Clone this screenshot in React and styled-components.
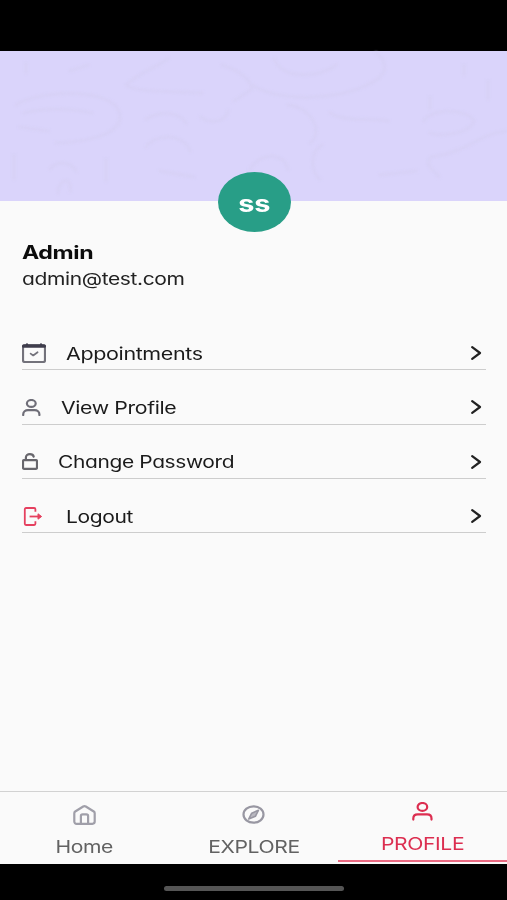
import React from 'react';
import styled, { createGlobalStyle } from 'styled-components';


const menu = [
    { id: 'appointments', label: 'Appointments', icon: CalendarIcon, gap: 20, stretch: 1.265 },
    { id: 'view', label: 'View Profile', icon: UserIcon, gap: 20, stretch: 1.25 },
    { id: 'password', label: 'Change Password', icon: LockIcon, gap: 20.5, stretch: 1.232 },
    { id: 'logout', label: 'Logout', icon: LogoutIcon, gap: 23, stretch: 1.235 },
];

export default function App(){
    return(
        <Screen>
            <GlobalStyle/>
            <StatusBar/>
            <Banner>
                <BannerPattern/>
                <Avatar><Text $stretch={1.2}>ss</Text></Avatar>
            </Banner>

            <Content>
                <Name><Text $stretch={1.25}>Admin</Text></Name>
                <Email><Text $stretch={1.235}>admin@test.com</Text></Email>

                <Menu>
                    {menu.map(({ id, label, icon: Icon, gap, stretch }) => (
                        <MenuItem key={id}>
                            <Icon/>
                            <MenuLabel $gap={gap}><Text $stretch={stretch}>{label}</Text></MenuLabel>
                            <ChevronIcon/>
                        </MenuItem>
                    ))}
                </Menu>
            </Content>

            <TabBar>
                <Tab>
                    <HomeIcon/>
                    <TabLabel><Text $center $stretch={1.24}>Home</Text></TabLabel>
                </Tab>
                <Tab>
                    <CompassIcon/>
                    <TabLabel><Text $center $stretch={1.24}>EXPLORE</Text></TabLabel>
                </Tab>
                <Tab $active>
                    <ProfileIcon/>
                    <TabLabel><Text $center $stretch={1.24}>PROFILE</Text></TabLabel>
                </Tab>
            </TabBar>
            <BottomBar>
                <HomeIndicator/>
            </BottomBar>
        </Screen>
    )
}

// icons
function CalendarIcon(){
    return(
        <Icon width='24' height='20' viewBox='0 0 24 20' $color='#73727b'>
            <rect x='1' y='2' width='22' height='17' rx='1.8'/>
            <path d='M1.6 3.2h20.8' stroke='#3f3d4c' strokeWidth='3.2'/>
            <path d='M5 1.4v1M19 1.4v1' stroke='#3f3d4c'/>
            <path d='M8.6 10.6l2.6 1.9 4.4-3.3' strokeWidth='1.7'/>
        </Icon>
    )
}

function UserIcon(){
    return(
        <Icon width='19' height='17' viewBox='0 0 19 17' $color='#6f6e78'>
            <ellipse cx='9.3' cy='4.4' rx='4.4' ry='3.4'/>
            <path d='M1.2 16v-.6c0-2.6 2.2-4.3 4.8-4.3h6.6c2.6 0 4.8 1.7 4.8 4.3v.6'/>
        </Icon>
    )
}

function LockIcon(){
    return(
        <Icon width='16' height='17' viewBox='0 0 16 17' $color='#67666c'>
            <rect x='1' y='7.2' width='14' height='8.6' rx='1'/>
            <path d='M3.9 7V4.6c0-2 1.7-3.5 4-3.5 2 0 3.4 1 3.8 2.5'/>
        </Icon>
    )
}

function LogoutIcon(){
    return(
        <LogoutSvg width='21' height='19' viewBox='0 0 21 19' $color='#e5405f'>
            <path d='M13.4 4.8V2.2c0-.7-.5-1.2-1.2-1.2H4c-.7 0-1.2.5-1.2 1.2v14.6c0 .7.5 1.2 1.2 1.2h8.2c.7 0 1.2-.5 1.2-1.2v-2.6'/>
            <path d='M7.6 9.5H17'/>
            <path d='M16 6.8l3.6 2.7-3.6 2.7z' fill='#e5405f' strokeWidth='1'/>
        </LogoutSvg>
    )
}

function ChevronIcon(){
    return(
        <Icon width='15' height='14' viewBox='0 0 15 14' $color='#222'>
            <path d='M1.2 1.2l7.8 5.8-7.8 5.8'/>
        </Icon>
    )
}

function HomeIcon(){
    return(
        <Icon width='23' height='20' viewBox='0 0 23 20' $color='#a09fa9'>
            <path d='M1.3 8.2c0-.7.3-1.3.9-1.7l8-5c.9-.5 1.7-.5 2.6 0l8 5c.6.4.9 1 .9 1.7v8.4c0 1.3-1 2.2-2.3 2.2H3.6c-1.3 0-2.3-.9-2.3-2.2z'/>
            <path d='M7.9 18.6v-7.6c0-1 .7-1.6 1.7-1.6h3.8c1 0 1.7.6 1.7 1.6v7.6'/>
        </Icon>
    )
}

function CompassIcon(){
    return(
        <Icon width='23' height='19' viewBox='0 0 23 19' $color='#9897a2'>
            <ellipse cx='11.5' cy='9.5' rx='10' ry='8.2'/>
            <path d='M16.4 5.3l-3 6-6.7 2.7 3-5.8z' fill='#b9b8c0' strokeWidth='1.6'/>
        </Icon>
    )
}

function ProfileIcon(){
    return(
        <Icon width='21' height='19' viewBox='0 0 21 19' $color='#dc2e50'>
            <ellipse cx='10.4' cy='4.9' rx='4.8' ry='3.9'/>
            <path d='M1.3 17.6v-1.2c0-2.4 1.8-4.1 4.4-4.1h9.4c2.6 0 4.4 1.7 4.4 4.1v1.2'/>
        </Icon>
    )
}

// faint contour lines behind the avatar
function BannerPattern(){
    return(
        <PatternSvg width='507' height='150' viewBox='0 0 507 150'>
            <path d='M16 54c20-14 88-18 102 4 10 22-20 32-62 34M24 62c22-6 50-4 68 0M20 76l28 4'/>
            <path d='M168 8c-12 8-32 16-42 26 8 8 50 6 76 8M222 14c18 6 28 14 30 24l-18 12'/>
            <path d='M252 34c30 18 92 16 126-6 10-8 8-20-2-26M274 8c8 20 44 20 62 6'/>
            <path d='M146 68c14-8 32-8 40 4M200 66c12 8 26 4 28-6M146 96c10-14 38-14 44 4'/>
            <path d='M288 54c24 2 36 28 22 38M322 94c-14 8-10 30-2 34M330 62c18 10 36 4 58 8'/>
            <path d='M424 70c8-14 44-12 50 0-4 12-30 16-44 12M507 80c-28 2-40 22-76 26-8 8 4 14 8 20'/>
            <path d='M14 104v24M50 118c8-10 22-6 26 2M58 142c0-14 14-18 12-2M106 108v22M26 12v10M70 20l18-6'/>
            <path d='M250 118c12-18 34-16 38 0M160 120l34 6M380 124l36-4M430 46v12M488 30v18M464 14v10'/>
        </PatternSvg>
    )
}

const GlobalStyle = createGlobalStyle`
    body {
        margin: 0;
        background: #fafafa;
        font-family: Inter, Lato, sans-serif;
        font-feature-settings: "cv11" 1;
    }
`;

//containers
const Screen = styled.div`
    display: flex;
    flex-direction: column;
    height: 900px;
    overflow: hidden;
    background: #fafafa;
`;

const StatusBar = styled.div`
    flex: none;
    height: 51px;
    background: #000;
`;

const Banner = styled.div`
    position: relative;
    flex: none;
    height: 150px;
    background: #dad4fb;
`;

const Content = styled.div`
    flex: 1;
    padding: 37.5px 21px 0 22px;
`;

const Avatar = styled.div`
    position: absolute;
    left: 50%;
    bottom: -31px;
    display: flex;
    align-items: center;
    justify-content: center;
    box-sizing: border-box;
    width: 73px;
    height: 60px;
    margin-left: -36px;
    padding-top: 3px;
    border-radius: 50%;
    background: #289e87;
    color: #fff;
    font-size: 24px;
    font-weight: 700;
    line-height: 30px;
`;

// wide letterforms
const Text = styled.span`
    display: inline-block;
    white-space: nowrap;
    letter-spacing: -0.3px;
    transform: scaleX(${props => props.$stretch});
    transform-origin: ${props => props.$center ? 'center' : 'left'};
    ${Avatar} & {
        transform-origin: center;
    }
`;

const Name = styled.div`
    height: 26px;
    color: #0c0c0c;
    font-size: 18.5px;
    font-weight: 650;
    line-height: 26px;
`;

const Email = styled.div`
    height: 28px;
    color: #222;
    font-size: 17px;
    line-height: 29px;
`;

//menu list
const Menu = styled.div`
    display: flex;
    flex-direction: column;
    gap: 21px;
    margin-top: 44.5px;
`;

const MenuItem = styled.div`
    display: flex;
    align-items: center;
    box-sizing: border-box;
    height: 33.3px;
    margin-left: -0.5px;
    border-bottom: 1px solid #cdcdcd;
`;

const MenuLabel = styled.div`
    flex: 1;
    margin-left: ${props => props.$gap}px;
    padding-top: 1px;
    color: #1b1b1b;
    font-size: 17px;
    font-weight: 430;
    line-height: 24px;
`;

//bottom navigation
const TabBar = styled.div`
    display: flex;
    flex: none;
    box-sizing: border-box;
    height: 73px;
    border-top: 1px solid #d2d2d2;
`;

const Tab = styled.div`
    display: flex;
    flex: 1;
    flex-direction: column;
    align-items: center;
    box-sizing: border-box;
    padding-top: ${props => props.$active ? 10 : 13}px;
    border-bottom: ${props => props.$active ? '2px solid #ea6a82' : 'none'};
    margin-bottom: 2px;
    color: ${props => props.$active ? '#dc2e50' : '#626262'};
`;

const TabLabel = styled.div`
    margin-top: auto;
    margin-bottom: 3px;
    font-size: 17px;
    line-height: 24px;
    ${Tab}:last-child & {
        margin-bottom: 4px;
    }
`;

const BottomBar = styled.div`
    display: flex;
    justify-content: center;
    flex: none;
    box-sizing: border-box;
    height: 36px;
    padding-top: 22px;
    background: #000;
`;

const HomeIndicator = styled.div`
    width: 180px;
    height: 5px;
    border-radius: 3px;
    background: #555;
`;

//drawings
const Icon = styled.svg`
    flex: none;
    fill: none;
    stroke: ${props => props.$color};
    stroke-width: 2.2;
    stroke-linecap: round;
    stroke-linejoin: round;
`;

const LogoutSvg = styled(Icon)`
    stroke-width: 1.8;
    stroke-linecap: butt;
`;

const PatternSvg = styled.svg`
    display: block;
    width: 100%;
    fill: none;
    stroke: #d7d1f6;
    stroke-width: 3;
    stroke-linecap: round;
    filter: blur(1.2px);
`;
